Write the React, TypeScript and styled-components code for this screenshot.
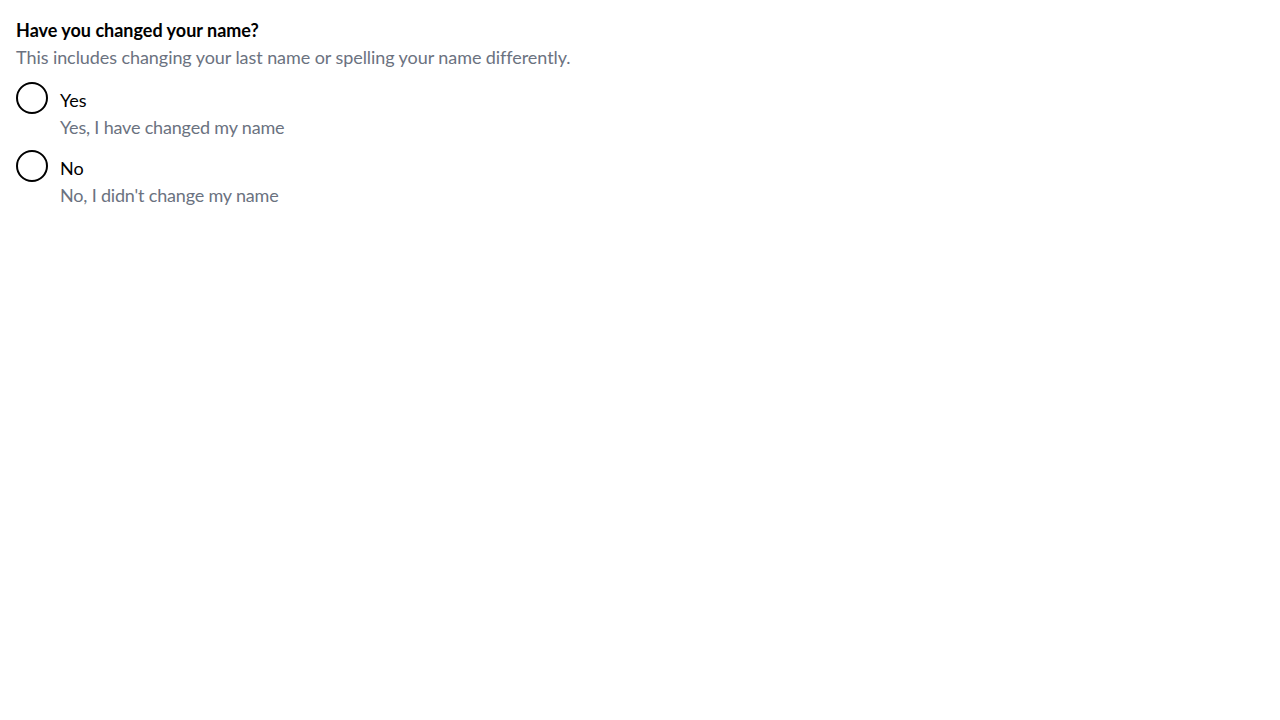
import React from "react";
import styled, { createGlobalStyle } from "styled-components";

const Global = createGlobalStyle`
  html, body { margin: 0; padding: 0; background: #fff; }
  body { font-family: Lato, "Open Sans", sans-serif; }
`;

const Fieldset = styled.fieldset`
  margin: 0;
  border: 0;
  padding: 17px 16px 16px;
  display: flex;
  flex-direction: column;
`;

const Legend = styled.legend`
  padding: 0;
  float: left;
  width: 100%;
  font-size: 18px;
  line-height: 27px;
  font-weight: 700;
  color: #000;
`;

const Hint = styled.p`
  margin: 0 0 11px;
  font-size: 18px;
  line-height: 27px;
  letter-spacing: -0.07px;
  color: #6b7280;
`;

const Options = styled.div`
  display: flex;
  flex-direction: column;
  gap: 9px;
`;

const Option = styled.label`
  display: flex;
  align-items: flex-start;
  gap: 12px;
  cursor: pointer;
`;

const Radio = styled.input.attrs({ type: "radio" })`
  appearance: none;
  margin: 0;
  flex: none;
  width: 32px;
  height: 32px;
  border: 2px solid #000;
  border-radius: 50%;
  background: #fff;
  box-sizing: border-box;
`;

const Text = styled.span`
  display: flex;
  flex-direction: column;
  padding-top: 5px;
`;

const Label = styled.span`
  font-size: 18px;
  line-height: 27px;
  color: #000;
`;

const Desc = styled.span`
  font-size: 18px;
  line-height: 27px;
  letter-spacing: -0.18px;
  color: #6b7280;
`;

const options = [
  { value: "yes", label: "Yes", desc: "Yes, I have changed my name" },
  { value: "no", label: "No", desc: "No, I didn't change my name" },
];

export default function App() {
  return (
    <>
      <Global />
      <Fieldset>
        <Legend>Have you changed your name?</Legend>
        <Hint>This includes changing your last name or spelling your name differently.</Hint>
        <Options>
          {options.map((o) => (
            <Option key={o.value}>
              <Radio name="changed-name" value={o.value} />
              <Text>
                <Label>{o.label}</Label>
                <Desc>{o.desc}</Desc>
              </Text>
            </Option>
          ))}
        </Options>
      </Fieldset>
    </>
  );
}
